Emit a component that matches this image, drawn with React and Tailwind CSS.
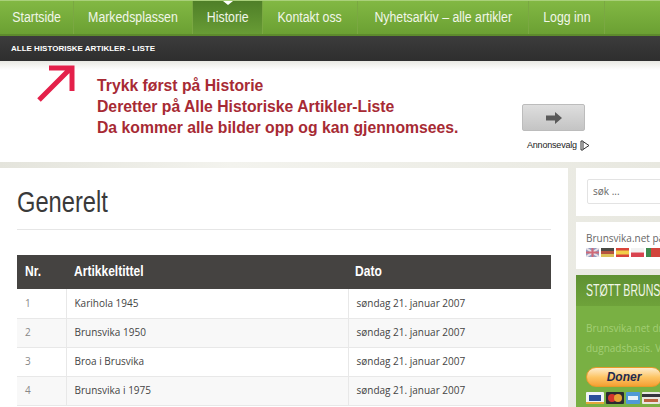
const navItems = [
  { label: "Startside", w: "w-[74px]" },
  { label: "Markedsplassen", w: "w-[119px]" },
  { label: "Historie", w: "w-[70px]", active: true },
  { label: "Kontakt oss", w: "w-[95px]" },
  { label: "Nyhetsarkiv – alle artikler", w: "w-[171px]" },
  { label: "Logg inn", w: "w-[76px]" },
];

const rows = [
  { nr: 1, title: "Karihola 1945" },
  { nr: 2, title: "Brunsvika 1950" },
  { nr: 3, title: "Broa i Brusvika" },
  { nr: 4, title: "Brunsvika i 1975" },
];

const Flags = () => (
  <svg width="74" height="9" viewBox="0 0 74 9" className="block">
    <rect x="0" y="0" width="13" height="9" fill="#8f9dc4" />
    <path d="M0 0L13 9M13 0L0 9" stroke="#e8e0e4" strokeWidth="2" />
    <path d="M6.5 0V9M0 4.5H13" stroke="#d06a78" strokeWidth="2" />
    <rect x="15" y="0" width="13" height="3" fill="#4a4a44" />
    <rect x="15" y="3" width="13" height="3" fill="#b5543f" />
    <rect x="15" y="6" width="13" height="3" fill="#dcc25a" />
    <rect x="30" y="0" width="13" height="9" fill="#d8443a" />
    <rect x="30" y="2.5" width="13" height="4" fill="#f2cf4a" />
    <rect x="45" y="0" width="13" height="4.5" fill="#f2f2f2" />
    <rect x="45" y="4.5" width="13" height="4.5" fill="#d9434f" />
    <rect x="60" y="0" width="5" height="9" fill="#3f8a4e" />
    <rect x="65" y="0" width="9" height="9" fill="#d2453c" />
  </svg>
);

const Cards = () => (
  <svg width="74" height="12" viewBox="0 0 74 12" className="block">
    <rect x="0" y="0" width="18" height="12" rx="1" fill="#f1f3f6" />
    <rect x="3" y="3" width="12" height="6" fill="#2a4f9a" />
    <rect x="0" y="10" width="18" height="2" fill="#e2a83a" />
    <rect x="20" y="0" width="18" height="12" rx="1" fill="#2a2a30" />
    <circle cx="26" cy="6" r="4" fill="#d4342c" />
    <circle cx="32" cy="6" r="4" fill="#e7a235" />
    <rect x="40" y="0" width="14" height="12" rx="1" fill="#4f9ad6" />
    <rect x="42" y="4" width="10" height="4" fill="#e8f2fa" />
    <rect x="56" y="0" width="18" height="12" rx="1" fill="#e8e6e0" />
    <rect x="56" y="2" width="18" height="3" fill="#34343c" />
    <rect x="58" y="7" width="14" height="3" fill="#b9633f" />
  </svg>
);

export default function App() {
  return (
    <div className="w-[660px] h-[407px] overflow-hidden bg-white font-['Liberation_Sans',sans-serif]">
      {/* Main menu */}
      <nav className="flex h-[36px] border-t border-[#a9d07a] border-b-2 border-b-[#5d8a2c] bg-gradient-to-b from-[#82b843] to-[#6ba033]">
        {navItems.map((item) => (
          <div
            key={item.label}
            className={`${item.w} relative flex items-center justify-center border-r border-[#7aa842] text-[14px] text-[#f1f6e8] whitespace-nowrap ${
              item.active ? "bg-gradient-to-b from-[#4f7f28] to-[#689c35]" : ""
            }`}
          >
            <span className="inline-block scale-x-[0.88]">{item.label}</span>
            {item.active && (
              <span className="absolute top-0 left-1/2 -translate-x-1/2 border-x-[5px] border-t-[4px] border-x-transparent border-t-white" />
            )}
          </div>
        ))}
      </nav>

      {/* Sub menu */}
      <div className="flex h-[25px] items-center pl-[11px] bg-gradient-to-b from-[#3c3c3c] to-[#2e2e2e] text-[8px] font-bold text-white">
        ALLE HISTORISKE ARTIKLER - LISTE
      </div>

      {/* Banner */}
      <div className="flex h-[101px] bg-gradient-to-b from-[#e9e9e3] via-white via-[9%] to-white">
        <div className="w-[97px] shrink-0 pl-[37px] pt-[3px]">
          <svg width="38" height="38" viewBox="0 0 38 38">
            <path d="M2 36L32 6M12 4H35V27" fill="none" stroke="#e4204a" strokeWidth="5" />
          </svg>
        </div>
        <div className="w-[425px] shrink-0 pt-[14px] text-[15.75px] leading-[21px] font-bold text-[#a72a34] whitespace-nowrap">
          <p>Trykk først på Historie</p>
          <p>Deretter på Alle Historiske Artikler-Liste</p>
          <p>Da kommer alle bilder opp og kan gjennomsees.</p>
        </div>
        <div className="pt-[43px]">
          <div className="flex h-[27px] w-[63px] items-center justify-center rounded-[2px] border border-[#bcbcbc] bg-gradient-to-b from-[#dedede] to-[#c4c4c4]">
            <svg width="16" height="12" viewBox="0 0 16 12">
              <path d="M0 3.5H9V0L16 6L9 12V8.5H0Z" fill="#5a5a5a" />
            </svg>
          </div>
          <div className="mt-[8px] flex items-center pl-[5px] text-[9px] tracking-[-0.2px] text-[#222] whitespace-nowrap">
            Annonsevalg
            <svg width="10" height="11" viewBox="0 0 10 11" className="ml-[3px]">
              <path d="M3 1H1V10H3M3 1.5L9 5.5L3 9.5Z" fill="none" stroke="#333" strokeWidth="1" />
            </svg>
          </div>
        </div>
      </div>

      {/* Content */}
      <div className="flex gap-[8px] h-[245px] pt-[6px] bg-gradient-to-r from-[#e4e4dc] via-[#f3f3ee] via-[35%] to-[#e8e8e0]">
        <main className="w-[568px] shrink-0 bg-white pl-[17px] pr-[17px]">
          <h1 className="mt-[16px] h-[46px] border-b border-[#e6e6e6] text-[30px] leading-[36px] text-[#3a3a3a]">
            <span className="inline-block origin-left scale-x-[0.79]">Generelt</span>
          </h1>
          <table className="mt-[25px] w-[534px] table-fixed border-collapse font-['Open_Sans',sans-serif]">
            <thead>
              <tr className="h-[34px] bg-[#454341] text-left text-[14px] text-white font-['Liberation_Sans',sans-serif]">
                <th className="w-[49px] pl-[8px] pb-[2px] font-bold">
                  <span className="inline-block origin-left scale-x-[0.86]">Nr.</span>
                </th>
                <th className="w-[282px] pl-[8px] pb-[2px] font-bold">
                  <span className="inline-block origin-left scale-x-[0.86]">Artikkeltittel</span>
                </th>
                <th className="pl-[7px] pb-[2px] font-bold">
                  <span className="inline-block origin-left scale-x-[0.86]">Dato</span>
                </th>
              </tr>
            </thead>
            <tbody className="text-[10px] text-[#444]">
              {rows.map((row, i) => (
                <tr key={row.nr} className={`h-[29px] border-b border-[#e8e8e8] ${i % 2 ? "bg-[#f8f8f8]" : "bg-white"}`}>
                  <td className="border-r border-[#e8e8e8] pl-[8px] text-[#888]">{row.nr}</td>
                  <td className="border-r border-[#e8e8e8] pl-[8px]">{row.title}</td>
                  <td className="pl-[8px]">søndag 21. januar 2007</td>
                </tr>
              ))}
            </tbody>
          </table>
        </main>

        {/* Sidebar */}
        <aside className="flex-1 min-w-0 flex flex-col gap-[6px]">
          <div className="h-[48px] bg-white pl-[11px] pt-[11px]">
            <div className="flex h-[25px] w-[120px] items-center rounded-[2px] border border-[#e3e3e3] pl-[5px] text-[10px] text-[#666] font-['Open_Sans',sans-serif]">
              søk ...
            </div>
          </div>
          <div className="h-[47px] bg-white pl-[10px] pt-[9px]">
            <div className="text-[10px] leading-[14px] text-[#666] whitespace-nowrap font-['Open_Sans',sans-serif]">
              Brunsvika.net på
            </div>
            <div className="mt-[3px]">
              <Flags />
            </div>
          </div>
          <div className="flex-1 bg-[#79b043]">
            <div className="flex h-[31px] items-center bg-gradient-to-b from-[#5f9132] to-[#6ea23a] pl-[10px] text-[16px] text-[#f1f6e8] whitespace-nowrap">
              <span className="inline-block origin-left scale-x-[0.66]">STØTT BRUNSVIKA</span>
            </div>
            <div className="pl-[10px] pt-[12px] text-[10px] leading-[20px] text-[#a3cf74] whitespace-nowrap font-['Open_Sans',sans-serif]">
              <p>Brunsvika.net drives på</p>
              <p>dugnadsbasis. Vi</p>
            </div>
            <div className="ml-[10px] mt-[9px] flex h-[20px] w-[76px] items-center justify-center rounded-full border border-[#e89a2a] bg-gradient-to-b from-[#fdeccb] via-[#fdc666] to-[#f5a031] text-[12px] font-bold italic text-[#1e2a50]">
              Doner
            </div>
            <div className="ml-[10px] mt-[5px]">
              <Cards />
            </div>
          </div>
        </aside>
      </div>
    </div>
  );
}
